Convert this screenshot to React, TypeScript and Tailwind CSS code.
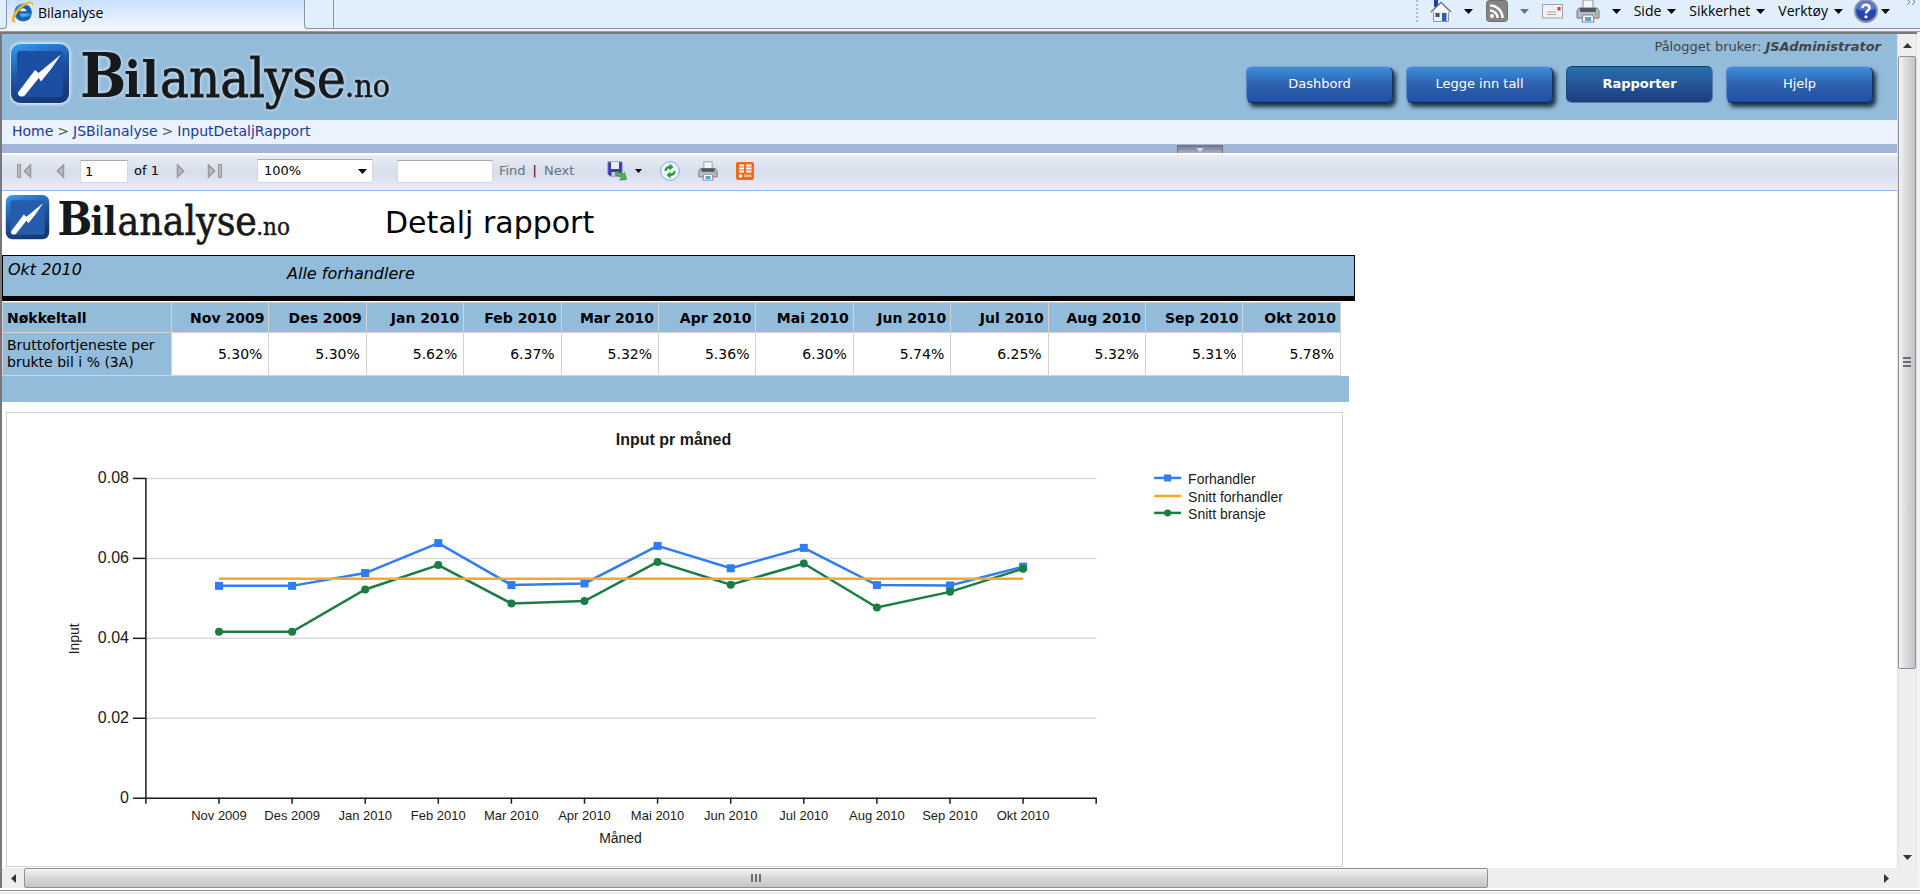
import { useState } from "react";
import type { ReactNode } from "react";
import { twMerge } from "tailwind-merge";

const months = ["Nov 2009", "Des 2009", "Jan 2010", "Feb 2010", "Mar 2010", "Apr 2010", "Mai 2010", "Jun 2010", "Jul 2010", "Aug 2010", "Sep 2010", "Okt 2010"];
const forhandler = [5.3, 5.3, 5.62, 6.37, 5.32, 5.36, 6.3, 5.74, 6.25, 5.32, 5.31, 5.78];
const snittBransje = [4.15, 4.15, 5.21, 5.82, 4.86, 4.92, 5.9, 5.33, 5.86, 4.76, 5.15, 5.73];
const snittForhandler = 5.48;

const navItems = ["Dashbord", "Legge inn tall", "Rapporter", "Hjelp"];

function Caret({ className }: { className?: string }) {
  return (
    <svg className={twMerge("h-[5px] w-[9px] shrink-0", className)} viewBox="0 0 9 5" aria-hidden="true">
      <path d="M0 0h9L4.5 5z" fill="currentColor" />
    </svg>
  );
}

function Logo({ id, className, glow }: { id: string; className?: string; glow?: boolean }) {
  const halo = `${id}-halo`;
  return (
    <svg className={className} viewBox="8 6 392 76" role="img" aria-label="Bilanalyse.no">
      <defs>
        <linearGradient id={`${id}-rim`} x1="0" y1="0" x2="0.35" y2="1">
          <stop offset="0" stopColor="#3fa2ee" />
          <stop offset="0.2" stopColor="#2b80d6" />
          <stop offset="0.6" stopColor="#1d4f9f" />
          <stop offset="1" stopColor="#163a78" />
        </linearGradient>
        <filter id={halo} x="-10%" y="-20%" width="120%" height="140%">
          <feGaussianBlur stdDeviation="1.8" />
        </filter>
      </defs>
      {glow && (
        <g filter={`url(#${halo})`} fill="#fff" stroke="#fff" strokeWidth="3" opacity="0.75">
          <rect x="9" y="10" width="58" height="59" rx="10" />
        </g>
      )}
      <rect x="9" y="10" width="58" height="59" rx="9" fill={`url(#${id}-rim)`} />
      <rect x="15" y="17" width="46" height="46" rx="4" fill={glow ? "#1c4fa1" : "#255cab"} />
      <path d="M59 20.500Q50 35 39 47.500L36.800 44 23.500 60.500c-2.500 3.500-8 2.500-7.500-2L33 36l3.500 3z" fill="#fff" />
      <g
        fontFamily="'DejaVu Serif Condensed', 'DejaVu Serif', serif"
        fill="#16191c"
        stroke="#16191c"
        className={glow ? "drop-shadow-[0_0_2px_#ffffffcc]" : ""}
      >
        <text x="78" y="63" fontSize="61" fontWeight="700" strokeWidth="0">B</text>
        <text x="122" y="63" fontSize="51" fontWeight="700" strokeWidth="0">il</text>
        <text x="158" y="63" fontSize="54" strokeWidth="0.8">analyse</text>
        <text x="343" y="63" fontSize="32" strokeWidth="0.5">.no</text>
      </g>
    </svg>
  );
}

function IeIcon() {
  return (
    <svg className="h-6 w-6" viewBox="0 0 24 24" aria-hidden="true">
      <circle cx="12" cy="12.500" r="9" fill="#2a8ad4" />
      <circle cx="12" cy="10.500" r="6.500" fill="#6cc4f3" opacity="0.6" />
      <path d="M7 13.500h13.500c0-6-3.500-8.500-8-8.500s-8 3-8 8 3.500 8 8 8c3.500 0 6-1.500 7.500-4.500h-5c-1 1-4 1.500-5.500-.5-.5-.7-.6-1.500-.5-2.500z" fill="#1b62ae" />
      <path d="M9 11.200h6.500c-.3-4-6.200-4-6.500 0z" fill="#dff2fd" />
      <path d="M4.500 21.500C-1 23.500.5 15 7 8.500S23-.5 21.500 5.500c1-6-8.500-1-13.500 5S1.500 21 4.500 21.500z" fill="#f2b52c" stroke="#f2b52c" strokeWidth="1" />
    </svg>
  );
}

function HomeIcon() {
  return (
    <svg className="h-6 w-[22px]" viewBox="0 0 22 24" aria-hidden="true">
      <path d="M4 0h4v8H4z" fill="#1b3fae" />
      <path d="M3.500 12h15v10.500h-15z" fill="#eceff5" stroke="#8d93a6" />
      <path d="M1 13 11 3.500 21 13" fill="#fff" stroke="#6b7390" strokeWidth="1.500" />
      <rect x="12" y="14" width="4.500" height="8" fill="#2c5fb0" />
      <rect x="5.500" y="14" width="4" height="4" fill="#4f4f58" />
    </svg>
  );
}

function RssIcon() {
  return (
    <svg className="h-[22px] w-[22px]" viewBox="0 0 22 22" aria-hidden="true">
      <rect x="0.500" y="0.500" width="21" height="21" rx="3" fill="#858585" stroke="#6d6d6d" />
      <circle cx="6" cy="16" r="2" fill="#fff" />
      <path d="M4 10.500a7.500 7.500 0 0 1 7.500 7.500M4 5.500A12.500 12.500 0 0 1 16.500 18" fill="none" stroke="#fff" strokeWidth="2.500" />
    </svg>
  );
}

function MailIcon() {
  return (
    <svg className="h-[15px] w-[21px]" viewBox="0 0 21 15" aria-hidden="true">
      <rect x="0.500" y="0.500" width="20" height="13.500" fill="#f1f1f1" stroke="#9fa3ab" />
      <path d="M5 8h9M5 10.500h9" stroke="#a5a5a5" />
      <rect x="15.500" y="3" width="3" height="3.500" fill="#dd3b35" />
    </svg>
  );
}

function PrinterIcon({ className }: { className?: string }) {
  return (
    <svg className={twMerge("h-6 w-6", className)} viewBox="0 0 24 24" aria-hidden="true">
      <path d="M7 1h10v9H7z" fill="#f6f7fa" stroke="#8e949f" />
      <path d="M3 9h18l2 3v7H1v-7z" fill="#b9bcc3" stroke="#6e727b" />
      <path d="M4 9h16v4H4z" fill="#54575e" />
      <path d="M7 16h10l1 7H6z" fill="#fff" stroke="#7d838e" />
      <path d="M9 18h6v4H9z" fill="#52a5dc" />
      <circle cx="20" cy="15" r="1" fill="#52b848" />
    </svg>
  );
}

function HelpIcon() {
  return (
    <svg className="h-6 w-6" viewBox="0 0 24 24" aria-hidden="true">
      <circle cx="12" cy="12" r="11" fill="#2346b5" stroke="#8b93a8" strokeWidth="2" />
      <path d="M3 10a9 8 0 0 1 18 0c-5 2-13 2-18 0z" fill="#6d8ce0" opacity="0.7" />
      <path d="M8.500 9c0-4.500 7-4.500 7 0 0 2.500-3.500 2.500-3.500 5.500" fill="none" stroke="#fff" strokeWidth="2.500" />
      <circle cx="12" cy="17.800" r="1.600" fill="#fff" />
    </svg>
  );
}

function ToolMenu({ label, children, muted }: { label: string; children?: ReactNode; muted?: boolean }) {
  return (
    <button type="button" aria-label={label} className="flex items-center gap-3">
      {children}
      <Caret className={muted ? "text-gray-500" : ""} />
    </button>
  );
}

function BrowserBar() {
  return (
    <div className="flex h-8 flex-col border-b border-[#a49da0] bg-[#f3f2f8] font-['Open_Sans',sans-serif] text-sm text-black">
      <div className="flex h-[29px] justify-between bg-[#e1eefb]">
        <div className="flex">
          <div className="w-[7px] rounded-br-sm border-r border-b border-[#8a94a8]" />
          <div className="flex w-[297px] items-start gap-[3px] bg-linear-to-b from-[#c9e0fb] to-[#f3f6fd] pl-1">
            <IeIcon />
            <span className="leading-[26px]">Bilanalyse</span>
          </div>
          <div className="w-[30px] rounded-bl-sm border-x border-b border-[#8a94a8]" />
        </div>
        <div className="flex flex-1 justify-end border-b border-[#8a94a8] pb-1.5">
          <div className="flex items-center gap-[13px] border-l-2 border-dotted border-[#b3bccb] pr-1 pl-3">
            <ToolMenu label="Startside"><HomeIcon /></ToolMenu>
            <ToolMenu label="Feeder" muted><RssIcon /></ToolMenu>
            <button type="button" aria-label="E-post"><MailIcon /></button>
            <ToolMenu label="Skriv ut"><PrinterIcon /></ToolMenu>
            {["Side", "Sikkerhet", "Verktøy"].map((name) => (
              <button key={name} type="button" className="flex items-center gap-1.5">
                {name}
                <Caret />
              </button>
            ))}
            <div className="flex h-full gap-3">
              <button type="button" aria-label="Hjelp" className="-ml-0.5 flex items-center gap-[3px]">
                <HelpIcon />
                <Caret />
              </button>
              <button type="button" aria-label="Flere" className="flex items-start pl-1">
                <svg className="h-[5px] w-2.5" viewBox="0 1 10 5" aria-hidden="true">
                  <path d="M1 0 4 3 1 6M6 0l3 3-3 3" fill="none" stroke="#6b7fb8" />
                </svg>
              </button>
            </div>
          </div>
        </div>
      </div>
    </div>
  );
}

function SiteHeader() {
  return (
    <header>
      <div className="flex h-[86px] justify-between bg-[#93bbda] pr-6 pl-2">
        <Logo id="head" glow className="mt-1.5 h-[76px] w-[392px]" />
        <div className="flex flex-col items-end">
          <p className="-mr-2 pt-1 text-[13px] leading-[18px] text-[#444]">
            Pålogget bruker: <b className="italic">JSAdministrator</b>
          </p>
          <nav className="mt-2.5 flex gap-[13px]">
            {navItems.map((item) => (
              <a
                key={item}
                href="#"
                className={twMerge(
                  "flex h-[37px] w-[147px] justify-center rounded-md border border-t-[#7fa6cf] border-r-[#12305f] border-b-[#0f2a55] border-l-[#5c8cc4] bg-linear-to-b from-[#3593e2] via-[#2f61ad] to-[#1f50a3] pt-2 text-[13px] leading-[18px] text-white shadow-[3px_4px_4px_#1d2f42]",
                  item === "Rapporter" && "border-t-[#123c63] border-r-[#5b79b4] border-b-[#5b79b4] border-l-[#1c4a7c] from-[#2470ac] via-[#27559a] to-[#1a3d7c] font-bold shadow-none"
                )}
              >
                {item}
              </a>
            ))}
          </nav>
        </div>
      </div>
      <nav className="flex h-6 items-center gap-1 bg-[#eaf2fe] pb-0.5 pl-2.5 text-sm text-[#1a3a96]">
        <a href="#">Home</a>
        <span className="text-[#555]">&gt;</span>
        <a href="#">JSBilanalyse</a>
        <span className="text-[#555]">&gt;</span>
        <a href="#">InputDetaljRapport</a>
      </nav>
      <div className="h-[9px] bg-[#a3b5d7] pt-px pl-[62%]">
        <button type="button" aria-label="Vis parametere" className="flex h-2 w-[46px] items-center justify-center border border-b-0 border-[#6f7688] bg-linear-to-b from-[#747c8f] to-[#a7afc2] text-[#d9dfec]">
          <Caret className="h-1 w-2" />
        </button>
      </div>
    </header>
  );
}

function PageArrow({ flip, end, label }: { flip?: boolean; end?: boolean; label: string }) {
  return (
    <button type="button" aria-label={label}>
      <svg className={twMerge("h-4", end ? "w-4" : "w-[9px]", flip && "rotate-180")} viewBox={end ? "0 0 16 16" : "0 0 9 16"}>
        <path d="M1.500 2 7.500 8 1.500 14z" fill="#b9bbbf" stroke="#96989c" strokeWidth="1.500" />
        {end && <rect x="11.500" y="1.500" width="3" height="13" fill="#b9bbbf" stroke="#96989c" />}
      </svg>
    </button>
  );
}

function ReportToolbar() {
  const [page, setPage] = useState("1");
  const [query, setQuery] = useState("");
  return (
    <div className="flex h-[38px] items-center border-t-2 border-b border-t-white border-b-[#9ab4d9] bg-linear-to-b from-[#e9edf6] via-[#d7ddec] to-[#e9edf6] pb-[3px] pl-3.5 text-[13px] text-black">
      <div className="flex items-center gap-6">
        <PageArrow flip end label="Første side" />
        <PageArrow flip label="Forrige side" />
      </div>
      <input
        aria-label="Side"
        value={page}
        onChange={(e) => setPage(e.target.value)}
        className="ml-[15px] h-[23px] w-12 border border-[#d5d8e0] border-t-[#a9abb3] bg-white px-1"
      />
      <span className="ml-1.5">of 1</span>
      <div className="ml-[17px] flex items-center gap-[22px]">
        <PageArrow label="Neste side" />
        <PageArrow end label="Siste side" />
      </div>
      <div className="relative ml-[34px]">
        <select aria-label="Zoom" defaultValue="100" className="h-6 w-[116px] appearance-none border border-[#d5d8e0] border-t-[#a9abb3] bg-white pl-1.5">
          <option value="100">100%</option>
          <option value="150">150%</option>
        </select>
        <Caret className="pointer-events-none absolute top-2.5 right-1.5" />
      </div>
      <input
        aria-label="Søk"
        value={query}
        onChange={(e) => setQuery(e.target.value)}
        className="ml-6 h-[23px] w-24 border border-[#d5d8e0] border-t-[#a9abb3] bg-white px-1"
      />
      <button type="button" className="ml-1.5 text-gray-500">Find</button>
      <span className="mx-[7px] text-[#400040]">|</span>
      <button type="button" className="text-gray-500">Next</button>
      <div className="ml-[33px] flex items-center gap-[18px]">
        <button type="button" aria-label="Eksporter" className="flex items-center gap-2">
          <svg className="h-5 w-5" viewBox="0 0 20 20">
            <path d="M1 1h14v14H3l-2-2z" fill="#3b3ca0" stroke="#6f70c4" />
            <path d="M4 1h8v7H4z" fill="#e9edfa" />
            <path d="M4.500 11h6v4h-6z" fill="#c7cbe2" />
            <path d="M9 10.500c3 0 5 1 6.500 3l2-2 2 7-7 .5 2-2c-1.500-1.500-3-2.500-6-2.500z" fill="#52b158" stroke="#2f8136" strokeWidth="0.700" />
          </svg>
          <Caret className="h-1 w-[7px]" />
        </button>
        <button type="button" aria-label="Oppdater">
          <svg className="h-5 w-5" viewBox="0 0 20 20">
            <circle cx="10" cy="10" r="9.300" fill="#eef6fd" stroke="#79aee3" />
            <path d="M4.500 10c0-3 2-5 5-5V2.500L13.500 6l-4 3.500V7.500c-2 0-3 1-3 2.500z" fill="#2b9a35" />
            <path d="M15.500 10c0 3-2 5-5 5v2.500L6.500 14l4-3.500v2c2 0 3-1 3-2.500z" fill="#2b9a35" />
          </svg>
        </button>
        <button type="button" aria-label="Skriv ut rapport">
          <PrinterIcon className="h-5 w-5" />
        </button>
        <button type="button" aria-label="Datafeed">
          <svg className="h-[18px] w-[18px]" viewBox="0 0 18 18">
            <rect width="18" height="18" rx="2" fill="#ec6b1d" />
            <path d="M3 2.500h5v8H3zM10 2.500h5.500v2H10zM10 5.500h5.500v2H10zM10 8.500h5.500v2H10z" fill="#fff" />
            <path d="M3 5h5M3 8h5" stroke="#ec6b1d" />
            <circle cx="4.500" cy="14" r="1.700" fill="#fff" />
            <path d="M8 12.500h7.500V15H8z" fill="#f6b48a" />
          </svg>
        </button>
      </div>
    </div>
  );
}

function KeyFigures() {
  return (
    <table className="w-full table-fixed border-collapse text-sm text-black">
      <thead>
        <tr className="h-[30px] bg-[#93bbda]">
          <th className="w-[169px] border border-[#d3d3d3] px-1 text-left">Nøkkeltall</th>
          {months.map((m) => (
            <th key={m} className="border border-[#d3d3d3] pr-1 text-right whitespace-nowrap">{m}</th>
          ))}
        </tr>
      </thead>
      <tbody>
        <tr className="h-[43px]">
          <th className="border border-[#d3d3d3] bg-[#93bbda] px-1 text-left leading-[17px] font-normal">
            Bruttofortjeneste per brukte bil i % (3A)
          </th>
          {forhandler.map((value, i) => (
            <td key={months[i]} className="border border-[#d3d3d3] pr-1.5 text-right">{value.toFixed(2)}%</td>
          ))}
        </tr>
      </tbody>
    </table>
  );
}

// plot area in svg units, origin at the top left of the chart frame
const left = 139;
const right = 1090;
const bottom = 385;
const step = (right - left) / 13;
const px = (i: number) => left + step * (i + 1);
const py = (percent: number) => bottom - percent * 40;
const line = (values: number[]) => values.map((v, i) => `${px(i)},${py(v)}`).join(" ");

function Chart() {
  return (
    <svg viewBox="0 0 1336 453" className="block h-auto w-full" fontFamily="'Liberation Sans', sans-serif" fill="#1a1a1a">
      <text x="667" y="32" textAnchor="middle" fontSize="16" fontWeight="700">Input pr måned</text>
      {[0, 2, 4, 6, 8].map((v) => (
        <g key={v}>
          {v > 0 && <line x1={left} x2={right} y1={py(v) + 0.5} y2={py(v) + 0.5} stroke="#d9d9d9" strokeWidth="1.500" />}
          <line x1={left - 13} x2={left} y1={py(v) + 0.5} y2={py(v) + 0.5} stroke="#1a1a1a" strokeWidth="1.500" />
          <text x={left - 17} y={py(v) + 5} textAnchor="end" fontSize="16">{v ? `0.0${v}` : "0"}</text>
        </g>
      ))}
      <path d={`M${left} ${py(8)}V${bottom + 6}M${left} ${bottom + 0.5}H${right}V${bottom + 6}`} fill="none" stroke="#1a1a1a" strokeWidth="1.500" />
      {months.map((m, i) => (
        <g key={m}>
          <line x1={px(i)} x2={px(i)} y1={bottom} y2={bottom + 6} stroke="#1a1a1a" strokeWidth="1.500" />
          <text x={px(i)} y={bottom + 22} textAnchor="middle" fontSize="13">{m}</text>
        </g>
      ))}
      <text x="614" y="430" textAnchor="middle" fontSize="14">Måned</text>
      <text transform="translate(72 226) rotate(-90)" textAnchor="middle" fontSize="14">Input</text>

      <polyline points={line(forhandler)} fill="none" stroke="#2f7df0" strokeWidth="2.500" />
      {forhandler.map((v, i) => (
        <rect key={months[i]} x={px(i) - 4} y={py(v) - 4} width="8" height="8" fill="#2f7df0" />
      ))}
      <polyline points={line(snittBransje)} fill="none" stroke="#1b7d44" strokeWidth="2.500" />
      {snittBransje.map((v, i) => (
        <circle key={months[i]} cx={px(i)} cy={py(v)} r="4" fill="#1b7d44" />
      ))}
      <line x1={px(0)} x2={px(11)} y1={py(snittForhandler)} y2={py(snittForhandler)} stroke="#ffa52b" strokeWidth="2.500" />

      <g fontSize="14">
        <g strokeWidth="2.500">
          <line x1="1148" x2="1175" y1="65" y2="65" stroke="#2f7df0" />
          <line x1="1148" x2="1175" y1="83" y2="83" stroke="#ffa52b" />
          <line x1="1148" x2="1175" y1="100" y2="100" stroke="#1b7d44" />
        </g>
        <rect x="1158" y="61.500" width="7" height="7" fill="#2f7df0" />
        <circle cx="1161.500" cy="100" r="3.500" fill="#1b7d44" />
        <text x="1182" y="71">Forhandler</text>
        <text x="1182" y="89">Snitt forhandler</text>
        <text x="1182" y="106">Snitt bransje</text>
      </g>
    </svg>
  );
}

function Report() {
  return (
    <main className="w-full max-w-[1353px]">
      <div className="flex h-16">
        <Logo id="report" className="mt-px ml-[3px] h-[57px] w-[294px]" />
        <h1 className="ml-[86px] pt-3 text-[30px] leading-10 text-black">Detalj rapport</h1>
      </div>
      <div className="flex h-[46px] border border-b-[5px] border-black bg-[#93bbda] text-base leading-6 text-black italic">
        <p className="w-[280px] pt-0.5 pl-[5px]">Okt 2010</p>
        <p className="pt-1.5 pl-1">Alle forhandlere</p>
      </div>
      <div className="mt-px mr-1.5">
        <div className="pr-2">
          <KeyFigures />
        </div>
        <div className="h-[26px] bg-[#93bbda]" />
      </div>
      <div className="mt-2.5 mr-3 ml-1 border border-[#d3d3d3]">
        <Chart />
      </div>
    </main>
  );
}

function Arrow({ turn }: { turn: string }) {
  return (
    <svg className={twMerge("h-[5px] w-[9px]", turn)} viewBox="0 0 9 5" aria-hidden="true">
      <path d="M0 5 4.500 0 9 5z" fill="#333" />
    </svg>
  );
}

function VerticalScroll() {
  return (
    <div className="flex w-5 flex-col border-x border-[#e2e2e2] bg-[#eeeeee]">
      <button type="button" aria-label="Rull opp" className="flex h-[22px] items-center justify-center"><Arrow turn="" /></button>
      <div className="flex grow-[611] flex-col items-center justify-center gap-0.5 rounded-xs border border-[#8e8f93] bg-linear-to-r from-[#f4f4f5] via-[#d6d8da] to-[#c3c5c8]">
        <span className="h-0.5 w-2 bg-[#6d6d6d]" />
        <span className="h-0.5 w-2 bg-[#6d6d6d]" />
        <span className="h-0.5 w-2 bg-[#6d6d6d]" />
      </div>
      <div className="grow-[180]" />
      <button type="button" aria-label="Rull ned" className="flex h-[22px] items-center justify-center"><Arrow turn="rotate-180" /></button>
    </div>
  );
}

function HorizontalScroll() {
  return (
    <div className="flex h-5 bg-[#eeeeee] pr-5">
      <button type="button" aria-label="Rull til venstre" className="flex w-[22px] items-center justify-center"><Arrow turn="-rotate-90" /></button>
      <div className="flex grow-[1461] items-center justify-center gap-0.5 rounded-xs border border-[#8e8f93] bg-linear-to-b from-[#f4f4f5] via-[#d6d8da] to-[#c3c5c8]">
        <span className="h-2 w-0.5 bg-[#6d6d6d]" />
        <span className="h-2 w-0.5 bg-[#6d6d6d]" />
        <span className="h-2 w-0.5 bg-[#6d6d6d]" />
      </div>
      <div className="grow-[390]" />
      <button type="button" aria-label="Rull til høyre" className="flex w-[22px] items-center justify-center"><Arrow turn="rotate-90" /></button>
    </div>
  );
}

export default function App() {
  return (
    <div className="flex min-h-screen flex-col bg-[#f3f2f8] font-['DejaVu_Sans',sans-serif]">
      <BrowserBar />
      <div className="mr-[3px] flex flex-1 flex-col border-t-2 border-l-2 border-[#77777c] bg-white">
        <div className="flex flex-1">
          <div className="min-w-0 flex-1">
            <SiteHeader />
            <ReportToolbar />
            <Report />
          </div>
          <VerticalScroll />
        </div>
        <HorizontalScroll />
      </div>
      <footer className="h-1.5 border-b-2 border-[#f0eaec] bg-white pt-0.5">
        <div className="h-px bg-[#8c8c90]" />
      </footer>
    </div>
  );
}
